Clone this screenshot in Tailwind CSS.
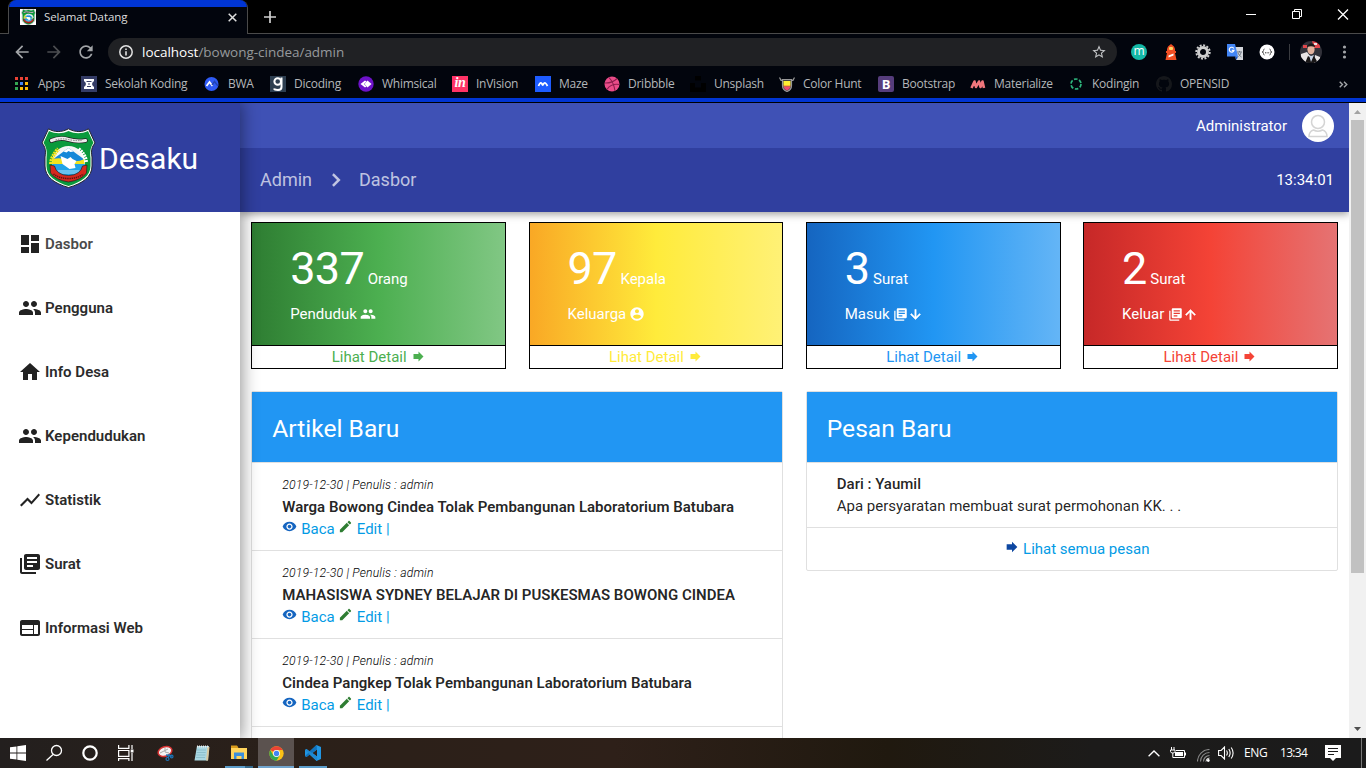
<!DOCTYPE html>
<html lang="id">
<head>
<meta charset="utf-8">
<title>Selamat Datang</title>
<script src="https://cdn.jsdelivr.net/npm/@tailwindcss/browser@4"></script>
</head>
<body class="w-[1366px] h-[768px] overflow-hidden bg-black font-['Roboto',sans-serif] text-[15px] text-black/87">
<svg class="hidden">
  <symbol id="dashboard" viewBox="0 0 24 24"><path d="M3 13h8V3H3v10zm0 8h8v-6H3v6zm10 0h8V11h-8v10zm0-18v6h8V3h-8z"/></symbol>
  <symbol id="people" viewBox="0 0 24 24"><path d="M16 11c1.66 0 2.99-1.34 2.99-3S17.66 5 16 5c-1.66 0-3 1.34-3 3s1.34 3 3 3zm-8 0c1.66 0 2.99-1.34 2.99-3S9.66 5 8 5C6.34 5 5 6.34 5 8s1.34 3 3 3zm0 2c-2.33 0-7 1.17-7 3.5V19h14v-2.5c0-2.33-4.67-3.5-7-3.5zm8 0c-.29 0-.62.02-.97.05 1.16.84 1.97 1.97 1.97 3.45V19h6v-2.5c0-2.33-4.67-3.5-7-3.5z"/></symbol>
  <symbol id="home" viewBox="0 0 24 24"><path d="M10 20v-6h4v6h5v-8h3L12 3 2 12h3v8z"/></symbol>
  <symbol id="chart" viewBox="0 0 24 24"><path d="M3.5 18.49l6-6.01 4 4L22 6.92l-1.41-1.41-7.09 7.97-4-4L2 16.99z"/></symbol>
  <symbol id="books" viewBox="0 0 24 24"><path d="M4 6H2v14c0 1.1.9 2 2 2h14v-2H4V6zm16-4H8c-1.1 0-2 .9-2 2v12c0 1.1.9 2 2 2h12c1.1 0 2-.9 2-2V4c0-1.1-.9-2-2-2zm-1 9H9V9h10v2zm-4 4H9v-2h6v2zm4-8H9V5h10v2z"/></symbol>
  <symbol id="web" viewBox="0 0 24 24"><path d="M20 4H4c-1.1 0-1.99.9-1.99 2L2 18c0 1.1.9 2 2 2h16c1.1 0 2-.9 2-2V6c0-1.1-.9-2-2-2zm-5 14H4v-4h11v4zm0-5H4V9h11v4zm5 5h-4V9h4v9z"/></symbol>
  <symbol id="account" viewBox="0 0 24 24"><path d="M12 2C6.48 2 2 6.48 2 12s4.48 10 10 10 10-4.48 10-10S17.52 2 12 2zm0 3c1.66 0 3 1.34 3 3s-1.34 3-3 3-3-1.34-3-3 1.34-3 3-3zm0 14.2c-2.5 0-4.71-1.28-6-3.22.03-1.99 4-3.08 6-3.08 1.99 0 5.97 1.09 6 3.08-1.29 1.94-3.5 3.22-6 3.22z"/></symbol>
  <symbol id="down" viewBox="0 0 24 24"><path stroke="#fff" stroke-width=".9" d="M20 12l-1.410-1.410L13 16.170V4h-2v12.170l-5.580-5.590L4 12l8 8 8-8z"/></symbol>
  <symbol id="up" viewBox="0 0 24 24"><path stroke="#fff" stroke-width=".9" d="M4 12l1.410 1.410L11 7.830V20h2V7.830l5.580 5.590L20 12l-8-8-8 8z"/></symbol>
  <symbol id="forward" viewBox="0 0 24 24"><path d="M12 8V4l8 8-8 8v-4H4V8z"/></symbol>
  <symbol id="eye" viewBox="0 0 24 24"><path d="M12 4.5C7 4.5 2.73 7.61 1 12c1.73 4.39 6 7.5 11 7.5s9.27-3.11 11-7.5c-1.73-4.39-6-7.5-11-7.5zM12 17c-2.76 0-5-2.24-5-5s2.24-5 5-5 5 2.24 5 5-2.24 5-5 5zm0-8c-1.66 0-3 1.34-3 3s1.34 3 3 3 3-1.34 3-3-1.34-3-3-3z"/></symbol>
  <symbol id="edit" viewBox="0 0 24 24"><path d="M3 17.25V21h3.75L17.81 9.94l-3.75-3.75L3 17.25zM20.71 7.04c.39-.39.39-1.02 0-1.41l-2.34-2.34c-.39-.39-1.02-.39-1.41 0l-1.83 1.83 3.75 3.75 1.83-1.83z"/></symbol>
  <symbol id="back" viewBox="0 0 24 24"><path d="M20 11H7.83l5.59-5.59L12 4l-8 8 8 8 1.41-1.41L7.83 13H20v-2z"/></symbol>
  <symbol id="crest" viewBox="0 0 54 60">
    <path d="M7 .8C13 4.500 20 4.500 27 .8 34 4.500 41 4.500 47 .8L53.500 15C50 19 49.500 23 50.500 29V38C50.500 49 41 55.500 27 59.500 13 55.500 3.500 49 3.500 38V29C4.500 23 4 19 .5 15Z" fill="#fff" stroke="#23262b" stroke-width="1"/>
    <path d="M7.500 3C14 6 20.500 6 27 3 33.500 6 40 6 46.500 3L52 15C48.800 19 48.300 24 49 30V38C49 48 40 54 27 58 14 54 5 48 5 38V30C5.700 24 5.200 19 2 15Z" fill="#0a9a3c"/>
    <path d="M10 12.500Q19 9 27 11.500T44 12.500" fill="none" stroke="#222" stroke-width="4.600" stroke-linecap="round"/>
    <path d="M10 12.500Q19 9 27 11.500T44 12.500" fill="none" stroke="#eee" stroke-width="3.200" stroke-linecap="round"/>
    <path d="M14 12Q20 10 27 11.500T40 12.500" fill="none" stroke="#777" stroke-width="1" stroke-dasharray="1.500 1"/>
    <circle cx="27" cy="34.500" r="16.500" fill="#f4f6f4"/>
    <path d="M12 31C16 28 21 24 27 20 33 24 38 28 42 31V36H12Z" fill="#1488d8"/>
    <path d="M22 23.500L27 20 32 23.500 29 24 27 23 25 24.500Z" fill="#fff"/>
    <path d="M11 31Q19 29 27 32T43 31V36H11Z" fill="#f1e21c"/>
    <path d="M10.500 36H43.500Q43 44 36 48H18Q11 44 10.500 36Z" fill="#22a3e6"/>
    <path d="M9.500 36Q10 28 17 21" fill="none" stroke="#f1e21c" stroke-width="4" stroke-dasharray="2 .7"/>
    <path d="M44.500 34Q44 27 37 21" fill="none" stroke="#fff" stroke-width="4" stroke-dasharray="2 .7"/>
    <path d="M19 28L26 31 29 29 31 31 35 33 33 36 34 40 28 41 21 36Z" fill="#fff"/>
    <path d="M16 43h22M18 45h18" stroke="#d8effb" stroke-width=".8"/>
    <path d="M8.500 37L13 38Q15 47 27 47.500 39 47 41 38L45.500 37 45 45Q40 52 27 54 14 52 9 45Z" fill="#d6281e" stroke="#222" stroke-width=".7"/>
    <path d="M12 46Q18 50.500 27 50.500T42 46" fill="none" stroke="#5a1210" stroke-width="1.500" stroke-dasharray="1.300 .8"/>
  </symbol>
</svg>

<div class="flex flex-col w-full h-full">
  <!-- tab strip -->
  <header class="h-[34px] flex shrink-0 bg-black border-b border-[#4a4a4a] font-['Open_Sans',sans-serif]">
    <div class="ml-2 w-[240px] h-[34px] bg-[#02050d] border-x border-[#4a4a4a] rounded-t-lg overflow-hidden">
      <div class="h-[7px] bg-[#0035d4]"></div>
      <div class="flex items-center h-[20px] pl-[11px]">
        <div class="size-4 bg-white flex justify-center"><svg class="w-[15px] h-4"><use href="#crest"/></svg></div>
        <span class="ml-2 text-[11.500px] tracking-[-0.100px] text-[#dcdcdc] flex-1">Selamat Datang</span>
        <svg class="size-[9px] mr-[10px]" viewBox="0 0 9 9" stroke="#e0e0e0" stroke-width="1.500"><path d="M.7.7l7.600 7.600M8.300.7L.7 8.300"/></svg>
      </div>
    </div>
    <svg class="ml-4 mt-[11px] size-3" viewBox="0 0 12 12" stroke="#cfcfcf" stroke-width="1.700"><path d="M6 0v12M0 6h12"/></svg>
    <div class="flex-1"></div>
    <svg class="w-[104px] h-7" viewBox="1246 0 104 28" fill="none" stroke="#fff" stroke-width="1"><path d="M1246 14.500h10M1292.500 11.500h7v7h-7zM1294.500 11v-1.500h7v7H1300"/><path d="M1338 9.500l10 10M1348 9.500l-10 10" stroke-width="1.300"/></svg>
    <div class="w-4"></div>
  </header>

  <!-- address bar -->
  <div class="h-[34px] shrink-0 flex items-center bg-[#02050d] pt-[2px] font-['Open_Sans',sans-serif]">
    <svg class="ml-3 size-5 fill-[#a2a5a8]"><use href="#back"/></svg>
    <svg class="ml-3 size-5 fill-[#4c4e51] rotate-180"><use href="#back"/></svg>
    <svg class="ml-3 size-5 fill-[#a2a5a8]" viewBox="0 0 24 24"><path d="M17.650 6.350C16.200 4.900 14.210 4 12 4c-4.420 0-7.990 3.580-7.990 8s3.570 8 7.990 8c3.730 0 6.840-2.550 7.730-6h-2.080c-.82 2.330-3.040 4-5.650 4-3.310 0-6-2.690-6-6s2.690-6 6-6c1.660 0 3.140.69 4.220 1.780L13 11h7V4l-2.350 2.350z"/></svg>
    <div class="ml-3 w-[1009px] h-7 rounded-full bg-[#202124] flex items-center pl-[11px] pr-[10px]">
      <svg class="size-[14px]" viewBox="0 0 14 14"><circle cx="7" cy="7" r="6.200" fill="none" stroke="#e2e2e2" stroke-width="1.500"/><path d="M7 6.200v4.200M7 3.400v1.500" stroke="#e2e2e2" stroke-width="1.600"/></svg>
      <span class="ml-[9px] pt-px flex-1 text-[13.500px] tracking-[-0.020px] text-[#96999c]"><span class="text-white">localhost</span>/bowong-cindea/admin</span>
      <svg class="size-4 fill-[#c4c6c8]" viewBox="0 0 24 24"><path d="M22 9.240l-7.190-.62L12 2 9.190 8.630 2 9.240l5.460 4.730L5.820 21 12 17.270 18.180 21l-1.630-7.030L22 9.240zM12 15.400l-3.760 2.270 1-4.280-3.320-2.880 4.380-.38L12 6.100l1.710 4.040 4.380.38-3.320 2.880 1 4.280L12 15.400z"/></svg>
    </div>
    <div class="ml-[14px] size-4 rounded-full bg-[#14b8a6] text-white text-[12px] leading-[14px] text-center">m</div>
    <svg class="ml-4 size-4" viewBox="0 0 16 16"><path d="M4 5l1-2.500L8 0l3 2.500L12 5v2h1v2h-1l1.500 7h-11L4 9H3V7h1z" fill="#f04e23"/><rect x="6" y="3" width="4" height="3" rx="1" fill="#fdd663"/><path d="M5.500 11.500l5-2v2l-5 2z" fill="#fff"/></svg>
    <svg class="ml-4 size-4" viewBox="0 0 16 16" fill="none"><circle cx="8" cy="8" r="6.700" stroke="#cfcfcf" stroke-width="2" stroke-dasharray="2 1.500"/><circle cx="8" cy="8" r="4.500" stroke="#cfcfcf" stroke-width="3"/></svg>
    <svg class="ml-4 size-4" viewBox="0 0 16 16"><path d="M7 3h9v13H9z" fill="#d4d7dc"/><path d="M0 0h8l3 12.500H0z" fill="#4285f4"/><path d="M8 12.500h3L9.500 16z" fill="#1a57c7"/><path d="M6.800 4.500A2.400 2.400 0 1 0 7 6.300H4.800" fill="none" stroke="#fff" stroke-width="1.200"/><path d="M10 8h5M12.500 7v1M14 8.500c-.5 2-1.500 3-2.500 4M11 9c.5 1.500 2 3 3.500 4" stroke="#6b7480" fill="none"/></svg>
    <svg class="ml-4 size-4" viewBox="0 0 16 16"><circle cx="8" cy="8" r="7.500" fill="#fff"/><path d="M5.500 5Q4.500 5 4.500 6.500T3 8Q4.500 8 4.500 9.500T5.500 11M10.500 5Q11.500 5 11.500 6.500T13 8Q11.500 8 11.500 9.500T10.500 11" fill="none" stroke="#555"/><path d="M6 8.800h1M7.600 8.800h1M9.200 8.800h1" stroke="#333"/></svg>
    <div class="ml-[14px] w-px h-4 bg-[#3a3c40]"></div>
    <svg class="ml-[10px] size-[22px]" viewBox="0 0 22 22"><clipPath id="av"><circle cx="11" cy="11" r="11"/></clipPath><g clip-path="url(#av)"><path fill="#32323a" d="M0 0h22v22H0z"/><path fill="#e0474c" d="M12 0h8v7h-6zM3 4h4v3H3z"/><path fill="#e8e4e4" d="M14 2h3v2h-3zM1 13l6-2 3 4-3 7H0zM15 14l5 2v6h-6z"/><ellipse cx="11" cy="8.500" rx="3.600" ry="4.800" fill="#e3b39e"/><path fill="#191717" d="M7 6q1-4 4.500-3.500T15 6q-4-1.500-8 0zM5 22l3-7 3 2 3-2 4 7z"/><path fill="#c9d5e6" d="M9 14l2 7 3-7-3 1z"/></g></svg>
    <svg class="ml-5 w-[5px] h-4 fill-[#a2a5a8]" viewBox="0 0 5 16"><circle cx="2.500" cy="3" r="1.600"/><circle cx="2.500" cy="8" r="1.600"/><circle cx="2.500" cy="13" r="1.600"/></svg>
  </div>

  <!-- bookmarks -->
  <div class="h-[30px] shrink-0 flex items-center bg-[#02050d] pl-[14px] pt-[2px] font-['Open_Sans',sans-serif] text-[12px] tracking-[-0.250px] text-[#b4b7ba] whitespace-nowrap">
    <div class="w-[67px] flex items-center gap-2"><svg class="size-4" viewBox="0 0 16 16"><path fill="#ea4335" d="M1 1h3v3H1zM6 1h3v3H6zM11 1h3v3h-3z"/><path fill="#34a853" d="M1 6h3v3H1zM1 11h3v3H1z"/><path fill="#4285f4" d="M6 6h3v3H6z"/><path fill="#fbbc05" d="M11 6h3v3h-3zM6 11h3v3H6zM11 11h3v3h-3z"/></svg>Apps</div>
    <div class="w-[123px] flex items-center gap-2"><svg class="size-4" viewBox="0 0 16 16"><path fill="#343c66" d="M0 0h16v16H0z"/><path fill="#fff" d="M3 3h10v2.500h-1L11 8l1 2.500h1V13H3v-2.500h1L5 8 4 5.500H3z"/><path d="M5.500 5.500h5M7 8h2M6 10.500h4" stroke="#343c66"/></svg>Sekolah Koding</div>
    <div class="w-[66px] flex items-center gap-2"><svg class="size-4" viewBox="0 0 16 16"><circle cx="7.500" cy="8" r="7" fill="#2f5bf5"/><path d="M2.500 10l3-4 3 4" fill="none" stroke="#fff" stroke-width="1.700"/><path d="M8 9l2.500-3.500L14 10" fill="none" stroke="#2345b5" stroke-width="1.500"/></svg>BWA</div>
    <div class="w-[88px] flex items-center gap-2"><svg class="size-4" viewBox="0 0 16 16"><path fill="#2d3e50" d="M0 0h16v16H0z"/><circle cx="7.700" cy="5.500" r="3.300" fill="none" stroke="#fff" stroke-width="2"/><path d="M11.500 1.500v9.500q0 3-3.500 3T4 12.500" fill="none" stroke="#fff" stroke-width="2"/></svg>Dicoding</div>
    <div class="w-[94px] flex items-center gap-2"><svg class="size-4" viewBox="0 0 16 16"><circle cx="8" cy="8" r="7.700" fill="#6d12c9"/><path fill="#fff" d="M2.500 8L7 4.500l1.500 1L6 8l2.500 2.500-1.500 1z"/><path fill="#fff" d="M9.500 4.500L13.500 8l-4 3.500L6.500 8z"/></svg>Whimsical</div>
    <div class="w-[83px] flex items-center gap-2"><div class="size-4 bg-[#ff3366] text-white font-['Liberation_Serif',serif] font-bold italic text-[14px] leading-[14px] text-center">in</div>InVision</div>
    <div class="w-[69px] flex items-center gap-2"><svg class="size-4" viewBox="0 0 16 16"><path fill="#1e5cff" d="M0 0h16v16H0z"/><path d="M3.500 10q2-5 3.500-2 .7 2 1.500 0 1.500-3 4 2" fill="none" stroke="#fff" stroke-width="1.800"/></svg>Maze</div>
    <div class="w-[86px] flex items-center gap-2"><svg class="size-4" viewBox="0 0 16 16" fill="none"><circle cx="8" cy="8" r="7.500" fill="#ea4c89"/><path d="M5 1.500Q10 7 11 15M.5 7Q8 7.500 13 2.500M3 13.500Q7 7 15.500 8.500" stroke="#8c1d4c" stroke-width="1.100"/></svg>Dribbble</div>
    <div class="w-[89px] flex items-center gap-2"><svg class="size-4" viewBox="0 0 16 16"><path fill="#000" d="M5 0h6v4.500H5zM0 7h5v4.500h6V7h5v9H0z"/></svg>Unsplash</div>
    <div class="w-[99px] flex items-center gap-2"><svg class="size-4" viewBox="0 0 16 16"><path d="M.5 1.500l1.500 3h2M15.500 1.500l-1.500 3h-2M3.500 3.500h9v6q0 4.500-4.500 6-4.500-1.500-4.500-6z" fill="#444" stroke="#999" stroke-width="1.200"/><path fill="#ffee33" d="M4.500 5h7v4h-7z"/><path fill="#ffb42e" d="M4.500 9h7v1.500h-7z"/><path fill="#f04a70" d="M4.500 10.500h7q-.5 3-3.500 4-3-1-3.500-4z"/></svg>Color Hunt</div>
    <div class="w-[92px] flex items-center gap-2"><div class="size-4 rounded-[2px] bg-[#563d7c] text-white font-bold text-[13px] leading-4 text-center">B</div>Bootstrap</div>
    <div class="w-[98px] flex items-center gap-2"><svg class="size-4" viewBox="0 0 16 16"><path d="M1.500 12L4.500 5.500 6 11l3-5.500L10.500 11l2-5.500 1.500 6.500" fill="none" stroke="#f0767c" stroke-width="2.600" stroke-linejoin="round"/></svg>Materialize</div>
    <div class="w-[88px] flex items-center gap-2"><svg class="size-4" viewBox="0 0 16 16"><circle cx="8" cy="8" r="5" fill="none" stroke="#2eb67d" stroke-width="1.700" stroke-dasharray="3.600 1.636"/></svg>Kodingin</div>
    <div class="flex-1 flex items-center gap-2"><svg class="size-4" viewBox="0 0 16 16"><path fill="#15171b" d="M8 0C3.580 0 0 3.580 0 8c0 3.540 2.290 6.530 5.470 7.590.4.070.55-.17.55-.38 0-.19-.01-.82-.01-1.490-2.010.37-2.530-.49-2.690-.94-.09-.23-.48-.94-.82-1.130-.28-.15-.68-.52-.01-.53.63-.01 1.080.58 1.230.82.720 1.210 1.870.87 2.330.66.070-.52.28-.87.51-1.070-1.780-.2-3.640-.89-3.640-3.950 0-.87.31-1.590.82-2.150-.08-.2-.36-1.020.08-2.120 0 0 .67-.21 2.200.82.640-.18 1.320-.27 2-.27s1.360.09 2 .27c1.530-1.040 2.200-.82 2.200-.82.440 1.100.16 1.920.08 2.120.51.56.82 1.270.82 2.150 0 3.070-1.870 3.750-3.650 3.950.29.25.54.73.54 1.480 0 1.070-.01 1.930-.01 2.200 0 .21.15.46.55.38A8.010 8.010 0 0 0 16 8c0-4.420-3.580-8-8-8z"/></svg>OPENSID</div>
    <svg class="w-[9px] h-[7px] mr-[18px]" viewBox="0 0 9 7" fill="none" stroke="#a2a5a8" stroke-width="1.400"><path d="M.7.7L3.500 3.500.7 6.300M5 .7l2.800 2.800L5 6.300"/></svg>
  </div>
  <div class="h-[5px] shrink-0 bg-[#0035d4] border-b border-black"></div>

  <!-- page -->
  <div class="flex h-[635px] shrink-0 bg-white overflow-hidden">
    <aside class="w-[240px] shrink-0 bg-white z-10 shadow-[0_0_16px_2px_rgba(0,0,0,0.42)]">
      <div class="h-[109px] bg-[#303f9f] flex pl-[41px]">
        <svg class="w-[55px] h-[60px] mt-[25px]"><use href="#crest"/></svg>
        <span class="ml-[3px] mt-[35px] text-[30px] leading-[42px] text-white">Desaku</span>
      </div>
      <nav class="font-semibold tracking-[0.020px] text-[#2b2b2b]">
        <a class="h-16 flex items-center pl-[18px] gap-[3px] text-[#4a4a4a]"><svg class="size-6 fill-[#222]"><use href="#dashboard"/></svg>Dasbor</a>
        <a class="h-16 flex items-center pl-[18px] gap-[3px]"><svg class="size-6 fill-[#222]"><use href="#people"/></svg>Pengguna</a>
        <a class="h-16 flex items-center pl-[18px] gap-[3px]"><svg class="size-6 fill-[#222]"><use href="#home"/></svg>Info Desa</a>
        <a class="h-16 flex items-center pl-[18px] gap-[3px]"><svg class="size-6 fill-[#222]"><use href="#people"/></svg>Kependudukan</a>
        <a class="h-16 flex items-center pl-[18px] gap-[3px]"><svg class="size-6 fill-[#222]"><use href="#chart"/></svg>Statistik</a>
        <a class="h-16 flex items-center pl-[18px] gap-[3px]"><svg class="size-6 fill-[#222]"><use href="#books"/></svg>Surat</a>
        <a class="h-16 flex items-center pl-[18px] gap-[3px]"><svg class="size-6 fill-[#222]"><use href="#web"/></svg>Informasi Web</a>
      </nav>
    </aside>

    <main class="w-[1109px] shrink-0">
      <div class="shadow-[0_2px_8px_rgba(0,0,0,0.4)] text-white">
        <div class="h-[45px] bg-[#3f51b5] flex items-center justify-end pr-[15px]">
          <span class="pt-[2px]">Administrator</span>
          <svg class="ml-[15px] size-8" viewBox="0 0 32 32"><circle cx="16" cy="16" r="16" fill="#fff"/><g fill="none" stroke="#d4d4d4" stroke-width="1.500"><circle cx="16" cy="12" r="6.500"/><path d="M7 26.500q0-5 4.500-6.500 4.500 2.500 9 0 4.500 1.500 4.500 6.500z"/></g></svg>
        </div>
        <div class="h-16 bg-[#303f9f] flex items-center pl-5 pr-[15px]">
          <span class="text-[18px] text-white/70 pb-[2px]">Admin</span>
          <svg class="ml-[11px] mr-[10px] size-[26px] fill-white/70" viewBox="0 0 24 24"><path stroke="#fff" stroke-opacity=".5" stroke-width=".5" d="M10 6L8.590 7.410 13.170 12l-4.580 4.590L10 18l6-6z"/></svg>
          <span class="text-[18px] text-white/70 flex-1 pb-[2px]">Dasbor</span>
          <span>13:34:01</span>
        </div>
      </div>

      <div class="grid grid-cols-4 gap-[22.500px] px-[11.250px] mt-[10px]">
        <div class="h-[147px] border border-black flex flex-col">
          <div class="h-[122px] bg-[linear-gradient(90deg,#2e7d32,#4caf50_50%,#81c784)] pl-[38px] text-white">
            <div class="pt-[17px] h-[74px] leading-[58px] whitespace-nowrap"><span class="text-[45px] tracking-[-0.700px]">337</span> Orang</div>
            <div class="flex items-center gap-[3px] h-[34px]">Penduduk<svg class="size-4 fill-white"><use href="#people"/></svg></div>
          </div>
          <div class="flex-1 border-t border-black flex items-center justify-center gap-1 text-[#4caf50]">Lihat Detail<svg class="size-[15px] fill-current"><use href="#forward"/></svg></div>
        </div>
        <div class="h-[147px] border border-black flex flex-col">
          <div class="h-[122px] bg-[linear-gradient(90deg,#f9a825,#ffeb3b_50%,#fff176)] pl-[38px] text-white">
            <div class="pt-[17px] h-[74px] leading-[58px] whitespace-nowrap"><span class="text-[45px] tracking-[-0.700px]">97</span> Kepala</div>
            <div class="flex items-center gap-[3px] h-[34px]">Keluarga<svg class="size-4 fill-white"><use href="#account"/></svg></div>
          </div>
          <div class="flex-1 border-t border-black flex items-center justify-center gap-1 text-[#ffeb3b]">Lihat Detail<svg class="size-[15px] fill-current"><use href="#forward"/></svg></div>
        </div>
        <div class="h-[147px] border border-black flex flex-col">
          <div class="h-[122px] bg-[linear-gradient(90deg,#1565c0,#2196f3_50%,#64b5f6)] pl-[38px] text-white">
            <div class="pt-[17px] h-[74px] leading-[58px] whitespace-nowrap"><span class="text-[45px] tracking-[-0.700px]">3</span> Surat</div>
            <div class="flex items-center h-[34px]">Masuk<svg class="ml-[3.500px] size-[15px] fill-white"><use href="#books"/></svg><svg class="size-[15px] fill-white"><use href="#down"/></svg></div>
          </div>
          <div class="flex-1 border-t border-black flex items-center justify-center gap-1 text-[#2196f3]">Lihat Detail<svg class="size-[15px] fill-current"><use href="#forward"/></svg></div>
        </div>
        <div class="h-[147px] border border-black flex flex-col">
          <div class="h-[122px] bg-[linear-gradient(90deg,#c62828,#f44336_50%,#e57373)] pl-[38px] text-white">
            <div class="pt-[17px] h-[74px] leading-[58px] whitespace-nowrap"><span class="text-[45px] tracking-[-0.700px]">2</span> Surat</div>
            <div class="flex items-center h-[34px]">Keluar<svg class="ml-[4px] size-[15px] fill-white"><use href="#books"/></svg><svg class="size-[15px] fill-white"><use href="#up"/></svg></div>
          </div>
          <div class="flex-1 border-t border-black flex items-center justify-center gap-1 text-[#f44336]">Lihat Detail<svg class="size-[15px] fill-current"><use href="#forward"/></svg></div>
        </div>
      </div>

      <div class="grid grid-cols-2 items-start gap-[22.500px] px-[11.250px] mt-[22px]">
        <section class="border border-[#e0e0e0] rounded-[2px] h-[400px]">
          <h2 class="h-[71px] bg-[#2196f3] border-b border-[#e0e0e0] pl-5 pt-1 flex items-center text-white text-[24.600px]">Artikel Baru</h2>
          <article class="h-[88px] border-b border-[#e0e0e0] pl-[30px] pt-[11px] leading-[22px]">
            <p class="text-[12.200px] italic font-light tracking-[0.180px] text-black">2019-12-30 | Penulis : admin</p>
            <p class="font-semibold tracking-[0.020px]">Warga Bowong Cindea Tolak Pembangunan Laboratorium Batubara</p>
            <p class="flex text-[#039be5]"><svg class="size-[15px] mt-[1px] mr-1 fill-[#1565c0]"><use href="#eye"/></svg>Baca<svg class="size-[15px] mt-[1px] mx-[3.500px] fill-[#2e7d32]"><use href="#edit"/></svg>Edit |</p>
          </article>
          <article class="h-[88px] border-b border-[#e0e0e0] pl-[30px] pt-[11px] leading-[22px]">
            <p class="text-[12.200px] italic font-light tracking-[0.180px] text-black">2019-12-30 | Penulis : admin</p>
            <p class="font-semibold tracking-[0.020px]">MAHASISWA SYDNEY BELAJAR DI PUSKESMAS BOWONG CINDEA</p>
            <p class="flex text-[#039be5]"><svg class="size-[15px] mt-[1px] mr-1 fill-[#1565c0]"><use href="#eye"/></svg>Baca<svg class="size-[15px] mt-[1px] mx-[3.500px] fill-[#2e7d32]"><use href="#edit"/></svg>Edit |</p>
          </article>
          <article class="h-[88px] border-b border-[#e0e0e0] pl-[30px] pt-[11px] leading-[22px]">
            <p class="text-[12.200px] italic font-light tracking-[0.180px] text-black">2019-12-30 | Penulis : admin</p>
            <p class="font-semibold tracking-[0.020px]">Cindea Pangkep Tolak Pembangunan Laboratorium Batubara</p>
            <p class="flex text-[#039be5]"><svg class="size-[15px] mt-[1px] mr-1 fill-[#1565c0]"><use href="#eye"/></svg>Baca<svg class="size-[15px] mt-[1px] mx-[3.500px] fill-[#2e7d32]"><use href="#edit"/></svg>Edit |</p>
          </article>
        </section>
        <section class="border border-[#e0e0e0] rounded-[2px]">
          <h2 class="h-[71px] bg-[#2196f3] border-b border-[#e0e0e0] pl-5 pt-1 flex items-center text-white text-[24.600px]">Pesan Baru</h2>
          <article class="h-[65px] border-b border-[#e0e0e0] pl-[30px] pt-[10px] leading-[22px]">
            <p class="font-medium">Dari : Yaumil</p>
            <p>Apa persyaratan membuat surat permohonan KK. . .</p>
          </article>
          <a class="h-[42px] flex justify-center pl-[10px] leading-[43px] text-[#039be5]"><svg class="size-4 mt-[11px] mr-[3px] fill-[#0d47a1]"><use href="#forward"/></svg>Lihat semua pesan</a>
        </section>
      </div>
    </main>

    <!-- scrollbar -->
    <div class="w-[17px] shrink-0 bg-[#f1f1f1] flex flex-col items-center">
      <svg class="w-[17px] h-[17px]" viewBox="0 0 17 17"><path d="M5 11l3.500-4 3.500 4z" fill="#a3a3a3"/></svg>
      <div class="w-[13px] h-[453px] bg-[#c1c1c1]"></div>
      <div class="flex-1"></div>
      <svg class="w-[17px] h-[17px]" viewBox="0 0 17 17"><path d="M5 6l3.500 4L12 6z" fill="#505050"/></svg>
    </div>
  </div>

  <!-- taskbar -->
  <footer class="h-[30px] shrink-0 flex items-center bg-[linear-gradient(90deg,#231f1e,#2b2019_22%,#2e2019_45%,#20190f_65%,#1c1b1a_80%,#1b1b1b)] font-['Open_Sans',sans-serif] text-[12px] text-white">
    <svg class="ml-[10px] size-4 fill-white" viewBox="0 0 16 16"><path d="M0 2.300l6.500-.9v6.200H0zM7.300 1.300L16 0v7.600H7.300zM0 8.400h6.500v6.200L0 13.700zM7.300 8.400H16V16l-8.700-1.300z"/></svg>
    <svg class="ml-[19px] size-[18px]" viewBox="0 0 18 18" fill="none" stroke="#fff" stroke-width="1.300"><circle cx="11.500" cy="6.500" r="5"/><path d="M8 10.500L1.500 16.500"/></svg>
    <svg class="ml-[19px] size-4" viewBox="0 0 16 16"><circle cx="8" cy="8" r="6.700" fill="none" stroke="#fff" stroke-width="2.200"/></svg>
    <svg class="ml-5 size-4" viewBox="0 0 16 16" fill="none" stroke="#fff" stroke-width="1.200"><path d="M.6 0v3.400h10.300V0M.6 16v-2.400h10.300V16M.6 5.500h10.300v5.800H.6zM14 0v4M14 8v8"/><path fill="#fff" stroke="none" d="M12.700 4.500h2.800v3h-2.800z"/></svg>
    <svg class="ml-[23px] size-[17px]" viewBox="0 0 17 17"><ellipse cx="8" cy="6.500" rx="7" ry="4.700" transform="rotate(-18 8 6.500)" fill="#f4f4f4" stroke="#d63232" stroke-width="1.500"/><path d="M3 8l8-4M8 3v4l4 1" stroke="#aaa" fill="none"/><path d="M9 10l6 1M12.500 9l-1.500 4" stroke="#1c74b8" stroke-width="1.400"/><circle cx="10.500" cy="14" r="1.500" fill="none" stroke="#1c74b8" stroke-width="1.200"/><circle cx="14.700" cy="11.500" r="1.300" fill="none" stroke="#1c74b8" stroke-width="1.200"/></svg>
    <svg class="ml-[20px] size-4" viewBox="0 0 16 16"><path d="M3 1h12l-1 14.500H.5z" fill="#a9d7e2"/><path d="M13.500 2h2L14 15.500h-2z" fill="#d9c9a0"/><path d="M3 5h9M2.700 7.500h9M2.400 10h9M2 12.500h9" stroke="#7fb4c3" stroke-width=".7"/><path d="M3 1.500h12" stroke="#eee" stroke-width="2" stroke-dasharray="1 1"/></svg>
    <div class="ml-[15px] w-7 h-[30px] flex flex-col items-center justify-between"><svg class="mt-[7px] w-4 h-[15px]" viewBox="0 0 16 15"><path d="M0 1h6l1 2h9v11H0z" fill="#ffd45c"/><path d="M0 .5h6l1.500 2.500H0z" fill="#d99b1b"/><path d="M3 7.500h10V14h-2.500v-3h-5v3H3z" fill="#3c8fdb"/></svg><div class="w-7 h-[2px] bg-[linear-gradient(90deg,#5b9cc9_70%,#356a8c_70%)]"></div></div>
    <div class="ml-[5px] w-9 h-[30px] bg-[#5b524f] flex flex-col items-center justify-between"><svg class="mt-2 size-[15px]" viewBox="0 0 48 48"><circle cx="24" cy="24" r="23" fill="#fbc116"/><path d="M24 24L4.100 12.500A23 23 0 0 1 43.900 12.500H24z" fill="#ea4335"/><path d="M4.100 12.500A23 23 0 0 0 24 47l10-17L24 24 14 30z" fill="#34a853"/><circle cx="24" cy="24" r="11" fill="#fff"/><circle cx="24" cy="24" r="8.500" fill="#4285f4"/></svg><div class="w-9 h-[2px] bg-[#76b9ed]/80"></div></div>
    <div class="ml-[5px] w-7 h-[30px] flex flex-col items-center justify-between"><svg class="mt-[7px] size-4" viewBox="0 0 16 16"><path d="M11.500 0L16 2v12l-4.500 2L4.500 9.500 1.500 12 0 11V5l1.500-1 3 2.500zM12 4.500L7.500 8 12 11.500z" fill="#2196e3" fill-rule="evenodd"/><path d="M0 11l11.500-11L12 4.500 1.500 12z" fill="#1173bd"/><path d="M0 5l1.500-1L12 11.500V16z" fill="#1f8ad2"/></svg><div class="w-7 h-[2px] bg-[#5b9cc9]"></div></div>
    <div class="flex-1"></div>
    <svg class="w-3 h-[7px]" viewBox="0 0 12 7" fill="none" stroke="#fff" stroke-width="1.300"><path d="M.6 6.300L6 1l5.400 5.300"/></svg>
    <svg class="ml-[10px] w-4 h-[13px]" viewBox="0 0 16 13" fill="none" stroke="#fff"><path d="M1.500 0v3M4 0v3M.5 3h4.500v1.500Q5 6 2.800 6T.5 4.500zM2.800 6v4.500h11.700v-7H6M15.500 5.500v3"/><path fill="#fff" stroke="none" d="M5 5h8v4H5z"/></svg>
    <svg class="ml-[11px] size-[13px] mt-1" viewBox="0 0 13 13" fill="none"><path d="M.5 12.500A12 12 0 0 1 12.500.5M3.500 12.500a9 9 0 0 1 9-9M6.500 12.500a6 6 0 0 1 6-6" stroke="#8b8b8b" stroke-width="1.100"/><path d="M9 12.500a3.500 3.500 0 0 1 3.500-3.500" stroke="#ddd"/><circle cx="11.300" cy="11.500" r="1.400" fill="#fff"/></svg>
    <svg class="ml-2 w-[17px] h-[14px]" viewBox="0 0 17 14" fill="none" stroke="#fff" stroke-width="1.100"><path d="M.6 4.500h2.500L6.500 1v12L3.100 9.500H.6zM8.500 4.500q1.700 2.500 0 5M10.800 3q2.700 4 0 8M13.200 1.500q3.800 5.500 0 11"/></svg>
    <span class="ml-[9px] w-6 tracking-[-0.300px]">ENG</span>
    <span class="ml-3 w-[28px] tracking-[-0.700px]">13:34</span>
    <svg class="ml-[17px] w-4 h-4" viewBox="0 0 16 16"><path fill="#fff" d="M0 0h16v13h-5l-3 3-3-3H0z"/><path d="M3 3.500h10M3 6.500h10M3 9.500h6" stroke="#1b1b1b"/></svg>
    <div class="ml-[20px] mr-[4px] w-px h-[30px] bg-[#777]"></div>
  </footer>
</div>
</body>
</html>
